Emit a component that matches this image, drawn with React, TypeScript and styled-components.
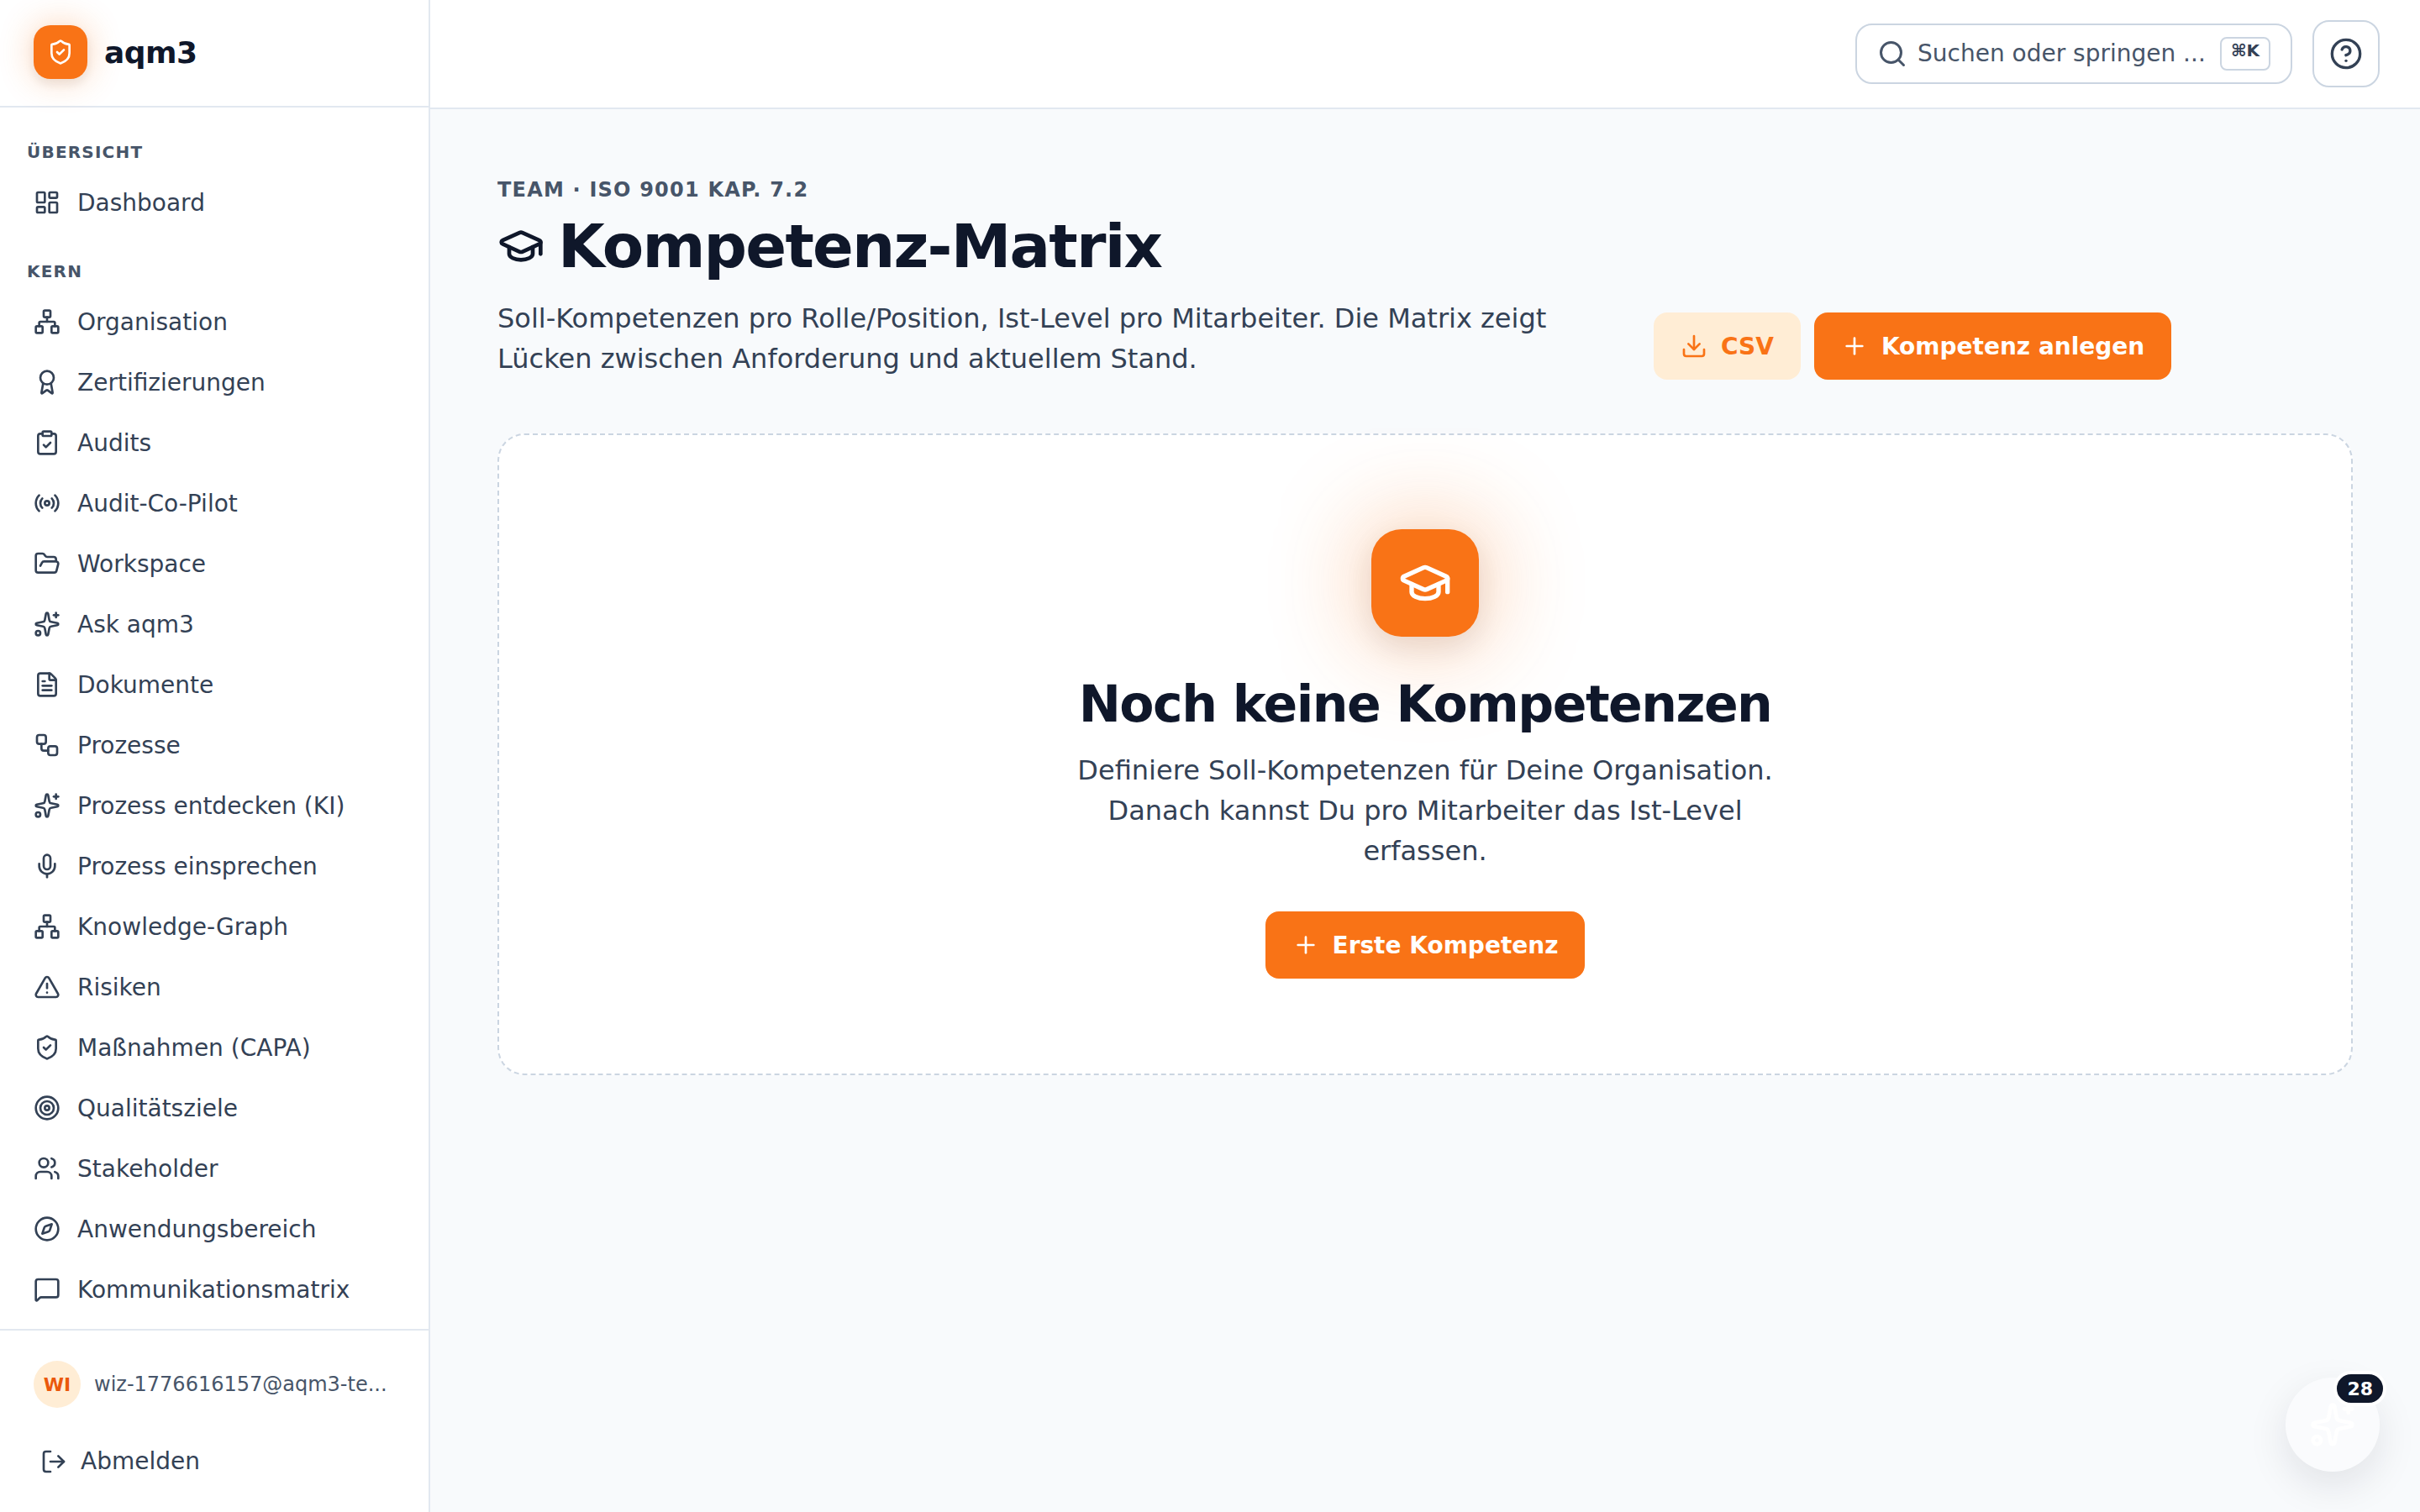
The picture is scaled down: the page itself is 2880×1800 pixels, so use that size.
import React, { FC } from 'react';
import styled, { createGlobalStyle } from 'styled-components';
import {
  LayoutDashboard, Network, Award, ClipboardCheck, Radio, FolderOpen, Sparkles, FileText,
  Workflow, Mic, TriangleAlert, ShieldCheck, Target, Users, Compass, MessageSquare,
  LogOut, Search, CircleHelp, GraduationCap, Download, Plus,
} from 'lucide-react';

const GlobalStyle = createGlobalStyle`
  html, body { margin: 0; padding: 0; height: 100%; }
  body { font-family: "DejaVu Sans", sans-serif; background: #f8fafc; color: #0f172a; }
  * { box-sizing: border-box; }
`;

const Shell = styled.div`
  display: flex;
  height: 1800px;
  overflow: hidden;
`;

const Sidebar = styled.aside`
  width: 512px;
  flex: none;
  display: flex;
  flex-direction: column;
  background: #fff;
  border-right: 2px solid #e2e8f0;
`;

const Brand = styled.div`
  height: 128px;
  flex: none;
  display: flex;
  align-items: center;
  gap: 20px;
  padding: 0 40px 2px;
  border-bottom: 2px solid #e2e8f0;
`;

const LogoBox = styled.div`
  width: 64px;
  height: 64px;
  border-radius: 20px;
  display: flex;
  align-items: center;
  justify-content: center;
  background: #f97316;
  color: #fff;
  box-shadow: 0 0 40px rgba(249, 115, 22, 0.3), 0 6px 12px rgba(15, 23, 42, 0.08);
`;

const BrandName = styled.span`
  font-size: 36px;
  font-weight: 700;
  letter-spacing: -0.5px;
  color: #0f172a;
`;

const NavArea = styled.nav`
  flex: 1;
  min-height: 0;
  overflow: hidden;
  padding-top: 41px;
`;

const SectionLabel = styled.div<{ $spaced?: boolean }>`
  height: 24px;
  line-height: 24px;
  margin-top: ${(p) => (p.$spaced ? '34px' : '0')};
  margin-bottom: 12px;
  padding-left: 32px;
  font-size: 20px;
  font-weight: 700;
  letter-spacing: 1.2px;
  color: #475569;
`;

const NavItem = styled.a`
  height: 72px;
  display: flex;
  align-items: center;
  gap: 20px;
  padding-left: 40px;
  font-size: 28px;
  color: #334155;
`;

const Footer = styled.div`
  flex: none;
  height: 218px;
  border-top: 2px solid #e2e8f0;
  padding: 36px 40px 0;
`;

const UserRow = styled.div`
  display: flex;
  align-items: center;
  gap: 16px;
`;

const Avatar = styled.div`
  width: 56px;
  height: 56px;
  flex: none;
  border-radius: 50%;
  display: flex;
  align-items: center;
  justify-content: center;
  background: #ffedd5;
  color: #ea580c;
  font-size: 22px;
  font-weight: 700;
`;

const Email = styled.span`
  font-size: 24px;
  color: #475569;
  white-space: nowrap;
`;

const Logout = styled.a`
  display: flex;
  align-items: center;
  gap: 16px;
  margin-top: 47px;
  padding-left: 8px;
  font-size: 28px;
  color: #334155;
`;

const Content = styled.div`
  flex: 1;
  min-width: 0;
  display: flex;
  flex-direction: column;
`;

const Topbar = styled.header`
  height: 130px;
  flex: none;
  display: flex;
  align-items: center;
  justify-content: flex-end;
  gap: 24px;
  padding: 0 48px 1px 0;
  background: #fff;
  border-bottom: 2px solid #e2e8f0;
`;

const SearchBox = styled.div`
  width: 520px;
  height: 72px;
  display: flex;
  align-items: center;
  gap: 12px;
  padding: 0 24px;
  background: #fff;
  border: 2px solid #cbd5e1;
  border-radius: 20px;
  color: #475569;
  font-size: 28px;
  white-space: nowrap;
`;

const Kbd = styled.kbd`
  margin-left: auto;
  width: 60px;
  height: 40px;
  flex: none;
  display: flex;
  justify-content: center;
  padding-top: 2px;
  border: 2px solid #cbd5e1;
  border-radius: 8px;
  font-family: "DejaVu Sans", sans-serif;
  font-size: 20px;
  line-height: 24px;
  font-weight: 700;
  color: #334155;
`;

const HelpButton = styled.button`
  width: 80px;
  height: 80px;
  display: flex;
  align-items: center;
  justify-content: center;
  padding: 0;
  background: #fff;
  border: 2px solid #cbd5e1;
  border-radius: 20px;
  color: #334155;
`;

const Main = styled.main`
  flex: 1;
  padding: 80px 80px 0;
`;

const PageHead = styled.div`
  display: flex;
  align-items: flex-end;
  gap: 32px;
  margin-bottom: 64px;
`;

const HeadText = styled.div`
  flex: 0 0 1344px;
  padding-bottom: 1px;
`;

const Eyebrow = styled.div`
  font-size: 24px;
  line-height: 32px;
  font-weight: 700;
  letter-spacing: 1.2px;
  color: #475569;
`;

const Title = styled.h1`
  display: flex;
  align-items: center;
  gap: 16px;
  margin: 11px 0 22px;
  font-size: 72px;
  line-height: 80px;
  font-weight: 700;
  letter-spacing: -1.8px;
  color: #0f172a;
`;

const Lead = styled.p`
  margin: 0;
  font-size: 32px;
  line-height: 48px;
  color: #334155;
`;

const Actions = styled.div`
  display: flex;
  gap: 16px;
`;

const Button = styled.button<{ $soft?: boolean }>`
  height: 80px;
  display: flex;
  align-items: center;
  gap: 16px;
  padding: 0 32px;
  border: 0;
  border-radius: 16px;
  font-family: inherit;
  font-size: 28px;
  font-weight: 700;
  white-space: nowrap;
  background: ${(p) => (p.$soft ? '#ffedd5' : '#f97316')};
  color: ${(p) => (p.$soft ? '#f97316' : '#fff')};
`;

const EmptyCard = styled.section`
  height: 764px;
  display: flex;
  flex-direction: column;
  align-items: center;
  padding-top: 112px;
  background: #fff;
  border: 2px dashed #cbd5e1;
  border-radius: 32px;
`;

const EmptyIcon = styled.div`
  width: 128px;
  height: 128px;
  display: flex;
  align-items: center;
  justify-content: center;
  border-radius: 36px;
  background: #f97316;
  color: #fff;
  box-shadow: 0 0 120px rgba(249, 115, 22, 0.45), 0 12px 32px rgba(15, 23, 42, 0.1);
`;

const EmptyTitle = styled.h2`
  margin: 44px 0 19px;
  font-size: 60px;
  line-height: 72px;
  font-weight: 700;
  letter-spacing: -1.5px;
  color: #0f172a;
`;

const EmptyText = styled.p`
  width: 896px;
  margin: 0 0 48px;
  font-size: 32px;
  line-height: 48px;
  text-align: center;
  color: #334155;
`;

const Fab = styled.div`
  position: fixed;
  right: 48px;
  bottom: 48px;
  width: 112px;
  height: 112px;
  display: flex;
  align-items: center;
  justify-content: center;
  border-radius: 50%;
  background: #fafbfd;
  color: #fff;
  box-shadow: 0 16px 48px rgba(15, 23, 42, 0.1);
`;

const FabBadge = styled.span`
  position: absolute;
  top: -8px;
  right: -8px;
  min-width: 62px;
  height: 42px;
  display: flex;
  align-items: center;
  justify-content: center;
  padding: 0 12px;
  border: 4px solid #fff;
  border-radius: 21px;
  background: #0f172a;
  color: #fff;
  font-size: 22px;
  font-weight: 700;
`;

const kern = [
  { label: 'Organisation', icon: Network },
  { label: 'Zertifizierungen', icon: Award },
  { label: 'Audits', icon: ClipboardCheck },
  { label: 'Audit-Co-Pilot', icon: Radio },
  { label: 'Workspace', icon: FolderOpen },
  { label: 'Ask aqm3', icon: Sparkles },
  { label: 'Dokumente', icon: FileText },
  { label: 'Prozesse', icon: Workflow },
  { label: 'Prozess entdecken (KI)', icon: Sparkles },
  { label: 'Prozess einsprechen', icon: Mic },
  { label: 'Knowledge-Graph', icon: Network },
  { label: 'Risiken', icon: TriangleAlert },
  { label: 'Maßnahmen (CAPA)', icon: ShieldCheck },
  { label: 'Qualitätsziele', icon: Target },
  { label: 'Stakeholder', icon: Users },
  { label: 'Anwendungsbereich', icon: Compass },
  { label: 'Kommunikationsmatrix', icon: MessageSquare },
];

const App: FC = () => {
  return (
    <Shell>
      <GlobalStyle />
      <Sidebar>
        <Brand>
          <LogoBox>
            <ShieldCheck size={32} />
          </LogoBox>
          <BrandName>aqm3</BrandName>
        </Brand>
        <NavArea>
          <SectionLabel>ÜBERSICHT</SectionLabel>
          <NavItem>
            <LayoutDashboard size={32} />
            Dashboard
          </NavItem>
          <SectionLabel $spaced>KERN</SectionLabel>
          {kern.map((item) => (
            <NavItem key={item.label}>
              <item.icon size={32} />
              {item.label}
            </NavItem>
          ))}
        </NavArea>
        <Footer>
          <UserRow>
            <Avatar>WI</Avatar>
            <Email>wiz-1776616157@aqm3-te...</Email>
          </UserRow>
          <Logout>
            <LogOut size={32} />
            Abmelden
          </Logout>
        </Footer>
      </Sidebar>
      <Content>
        <Topbar>
          <SearchBox>
            <Search size={36} />
            Suchen oder springen ...
            <Kbd>⌘K</Kbd>
          </SearchBox>
          <HelpButton>
            <CircleHelp size={40} />
          </HelpButton>
        </Topbar>
        <Main>
          <PageHead>
            <HeadText>
              <Eyebrow>TEAM · ISO 9001 KAP. 7.2</Eyebrow>
              <Title>
                <GraduationCap size={56} />
                Kompetenz-Matrix
              </Title>
              <Lead>
                Soll-Kompetenzen pro Rolle/Position, Ist-Level pro Mitarbeiter. Die Matrix zeigt Lücken zwischen
                Anforderung und aktuellem Stand.
              </Lead>
            </HeadText>
            <Actions>
              <Button $soft>
                <Download size={32} />
                CSV
              </Button>
              <Button>
                <Plus size={32} />
                Kompetenz anlegen
              </Button>
            </Actions>
          </PageHead>
          <EmptyCard>
            <EmptyIcon>
              <GraduationCap size={64} />
            </EmptyIcon>
            <EmptyTitle>Noch keine Kompetenzen</EmptyTitle>
            <EmptyText>
              Definiere Soll-Kompetenzen für Deine Organisation. Danach kannst Du pro Mitarbeiter das Ist-Level
              erfassen.
            </EmptyText>
            <Button>
              <Plus size={32} />
              Erste Kompetenz
            </Button>
          </EmptyCard>
        </Main>
      </Content>
      <Fab>
        <Sparkles size={56} />
        <FabBadge>28</FabBadge>
      </Fab>
    </Shell>
  );
};

export default App;
